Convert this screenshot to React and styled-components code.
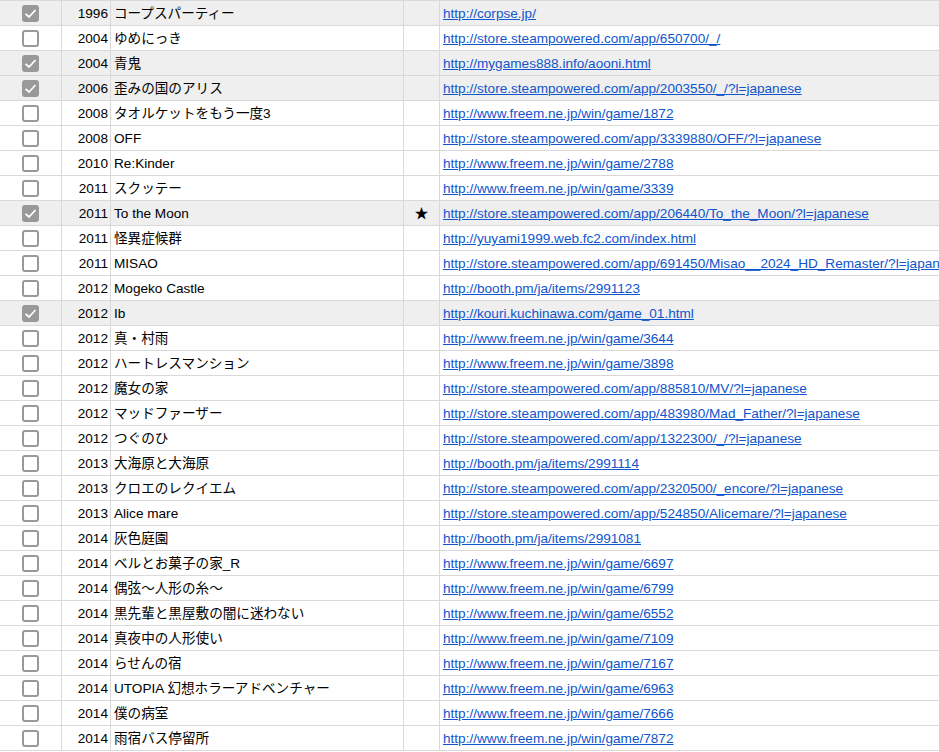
import React from 'react';
import styled, { createGlobalStyle } from 'styled-components';

const GlobalStyle = createGlobalStyle`
  html, body {
    margin: 0;
    padding: 0;
    width: 939px;
    height: 752px;
    overflow: hidden;
    background: #fff;
  }
`;

const games = [
  [true, '1996', 'コープスパーティー', '', 'http://corpse.jp/'],
  [false, '2004', 'ゆめにっき', '', 'http://store.steampowered.com/app/650700/_/'],
  [true, '2004', '青鬼', '', 'http://mygames888.info/aooni.html'],
  [true, '2006', '歪みの国のアリス', '', 'http://store.steampowered.com/app/2003550/_/?l=japanese'],
  [false, '2008', 'タオルケットをもう一度3', '', 'http://www.freem.ne.jp/win/game/1872'],
  [false, '2008', 'OFF', '', 'http://store.steampowered.com/app/3339880/OFF/?l=japanese'],
  [false, '2010', 'Re:Kinder', '', 'http://www.freem.ne.jp/win/game/2788'],
  [false, '2011', 'スクッテー', '', 'http://www.freem.ne.jp/win/game/3339'],
  [true, '2011', 'To the Moon', '★', 'http://store.steampowered.com/app/206440/To_the_Moon/?l=japanese'],
  [false, '2011', '怪異症候群', '', 'http://yuyami1999.web.fc2.com/index.html'],
  [false, '2011', 'MISAO', '', 'http://store.steampowered.com/app/691450/Misao__2024_HD_Remaster/?l=japanese'],
  [false, '2012', 'Mogeko Castle', '', 'http://booth.pm/ja/items/2991123'],
  [true, '2012', 'Ib', '', 'http://kouri.kuchinawa.com/game_01.html'],
  [false, '2012', '真・村雨', '', 'http://www.freem.ne.jp/win/game/3644'],
  [false, '2012', 'ハートレスマンション', '', 'http://www.freem.ne.jp/win/game/3898'],
  [false, '2012', '魔女の家', '', 'http://store.steampowered.com/app/885810/MV/?l=japanese'],
  [false, '2012', 'マッドファーザー', '', 'http://store.steampowered.com/app/483980/Mad_Father/?l=japanese'],
  [false, '2012', 'つぐのひ', '', 'http://store.steampowered.com/app/1322300/_/?l=japanese'],
  [false, '2013', '大海原と大海原', '', 'http://booth.pm/ja/items/2991114'],
  [false, '2013', 'クロエのレクイエム', '', 'http://store.steampowered.com/app/2320500/_encore/?l=japanese'],
  [false, '2013', 'Alice mare', '', 'http://store.steampowered.com/app/524850/Alicemare/?l=japanese'],
  [false, '2014', '灰色庭園', '', 'http://booth.pm/ja/items/2991081'],
  [false, '2014', 'ベルとお菓子の家_R', '', 'http://www.freem.ne.jp/win/game/6697'],
  [false, '2014', '偶弦〜人形の糸〜', '', 'http://www.freem.ne.jp/win/game/6799'],
  [false, '2014', '黒先輩と黒屋敷の闇に迷わない', '', 'http://www.freem.ne.jp/win/game/6552'],
  [false, '2014', '真夜中の人形使い', '', 'http://www.freem.ne.jp/win/game/7109'],
  [false, '2014', 'らせんの宿', '', 'http://www.freem.ne.jp/win/game/7167'],
  [false, '2014', 'UTOPIA 幻想ホラーアドベンチャー', '', 'http://www.freem.ne.jp/win/game/6963'],
  [false, '2014', '僕の病室', '', 'http://www.freem.ne.jp/win/game/7666'],
  [false, '2014', '雨宿バス停留所', '', 'http://www.freem.ne.jp/win/game/7872'],
];

const Sheet = styled.div`
  width: 939px;
  height: 752px;
  box-sizing: border-box;
  overflow: hidden;
  border-top: 1px solid #d9d9d9;
  font-family: "Liberation Sans", "Noto Sans CJK JP", sans-serif;
  font-size: 13.6px;
  line-height: 22px;
  color: #000;
`;

const Row = styled.div`
  display: grid;
  grid-template-columns: 62px 49px 293px 36px 1fr;
  height: 25px;
  box-sizing: border-box;
  border-bottom: 1px solid #d9d9d9;
  background: ${(p) => (p.$done ? '#efefef' : '#fff')};
`;

const Cell = styled.div`
  box-sizing: border-box;
  display: flex;
  align-items: center;
  min-width: 0;
  padding: 2px 3px 0;
  white-space: nowrap;
  overflow: hidden;
  border-right: 1px solid #d9d9d9;
`;

const CheckCell = styled(Cell)`
  justify-content: center;
  padding: 0;
`;

const YearCell = styled(Cell)`
  justify-content: flex-end;
  padding-right: 2px;
`;

const StarCell = styled(Cell)`
  justify-content: center;
  padding-top: 0;
  font-size: 14px;
`;

const UrlCell = styled(Cell)`
  border-right: none;
`;

const Url = styled.a`
  color: #1155cc;
  text-decoration: underline;
`;

const Box = styled.span`
  box-sizing: border-box;
  width: 17px;
  height: 17px;
  border-radius: 3px;
  display: flex;
  align-items: center;
  justify-content: center;
  border: 2px solid #999;
  background: ${(p) => (p.$checked ? '#999' : '#fff')};
`;

const Check = () => (
  <svg width="13" height="13" viewBox="0 0 13 13" fill="none">
    <path d="M1.5 6.8 L5 10 L11.5 3" stroke="#fff" strokeWidth="1.8" />
  </svg>
);

export default function App() {
  return (
    <Sheet>
      <GlobalStyle />
      {games.map(([done, year, title, star, url]) => (
        <Row key={title} $done={done}>
          <CheckCell>
            <Box $checked={done}>{done && <Check />}</Box>
          </CheckCell>
          <YearCell>{year}</YearCell>
          <Cell>{title}</Cell>
          <StarCell>{star}</StarCell>
          <UrlCell>
            <Url href={url}>{url}</Url>
          </UrlCell>
        </Row>
      ))}
    </Sheet>
  );
}
